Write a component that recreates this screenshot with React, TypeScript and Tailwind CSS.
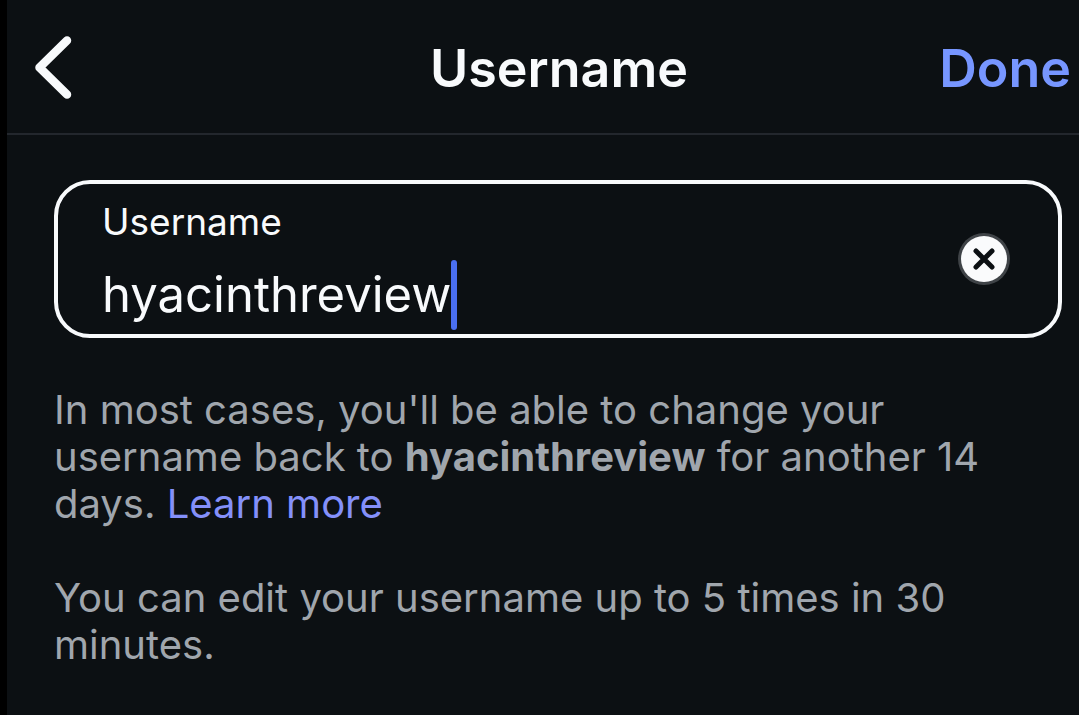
import { useRef, useState } from "react";

const Caret = () => {
    return <span className="h-[70px] w-[6px] shrink-0 rounded-full bg-[#4a6ff0]" />;
};

const App = () => {
    const [username, setUsername] = useState("hyacinthreview")
    const inputRef = useRef<HTMLInputElement>(null)

    const handleClear = () => {
        setUsername("")
        inputRef.current?.focus()
    }

    return (
        <div className="min-h-screen border-l-[7px] border-black bg-[#0c1013] font-['Inter',sans-serif] text-[#f8fafc]">
            <header className="grid h-[135px] grid-cols-[1fr_auto_1fr] items-center border-b-2 border-[#23272d] pr-2 pl-10">
                <button type="button" aria-label="Back" className="-ml-4 w-12 cursor-pointer">
                    <svg viewBox="0 0 48 72" className="h-[72px] w-12" fill="none" stroke="currentColor" strokeWidth="8.5" strokeLinecap="round" strokeLinejoin="round">
                        <path d="M36 9.500 8.500 36.500l27.500 27" />
                    </svg>
                </button>
                <h1 className="pt-1 text-[52px] leading-[64px] font-semibold">Username</h1>
                <button type="button" className="cursor-pointer justify-self-end pt-1 text-[52px] leading-[64px] font-semibold text-[#7796ff]">Done</button>
            </header>

            <main className="pt-[45px] pr-[17px] pl-[47px]">
                <div className="flex items-center justify-between rounded-[36px] border-4 border-[#f8fafc] pr-12 pl-11">
                    <div className="min-w-0 pt-3 pb-1">
                        <label htmlFor="username" className="block text-[37px] leading-[52px]">Username</label>
                        <div className="flex items-center pt-3">
                            <input
                                ref={inputRef}
                                id="username"
                                type="text"
                                value={username}
                                onChange={(e) => setUsername(e.target.value)}
                                className="field-sizing-content min-w-0 bg-transparent text-[49px] leading-[64px] caret-transparent outline-none"
                            />
                            <Caret />
                        </div>
                    </div>
                    <button type="button" aria-label="Clear username" onClick={handleClear} className="shrink-0 cursor-pointer">
                        <svg viewBox="0 0 52 52" className="size-[52px]">
                            <circle cx="26" cy="26" r="26" fill="#3f4347" />
                            <circle cx="26" cy="26" r="23" fill="#fafbfc" />
                            <path d="m18 18 16 16m0-16-16 16" stroke="#0c1013" strokeWidth="5" strokeLinecap="round" />
                        </svg>
                    </button>
                </div>

                <div className="space-y-[47px] pt-12 text-[40px] leading-[47px] text-[#a0a6ad]">
                    <p>
                        In most cases, you'll be able to change your username back to <strong className="inline-block font-bold">hyacinthreview</strong> for another 14 days. <a href="#learn-more" className="inline-block text-[#8490fa]">Learn more</a>
                    </p>
                    <p>You can edit your username up to 5 times in 30 minutes.</p>
                </div>
            </main>
        </div>
    );
}

export default App;
